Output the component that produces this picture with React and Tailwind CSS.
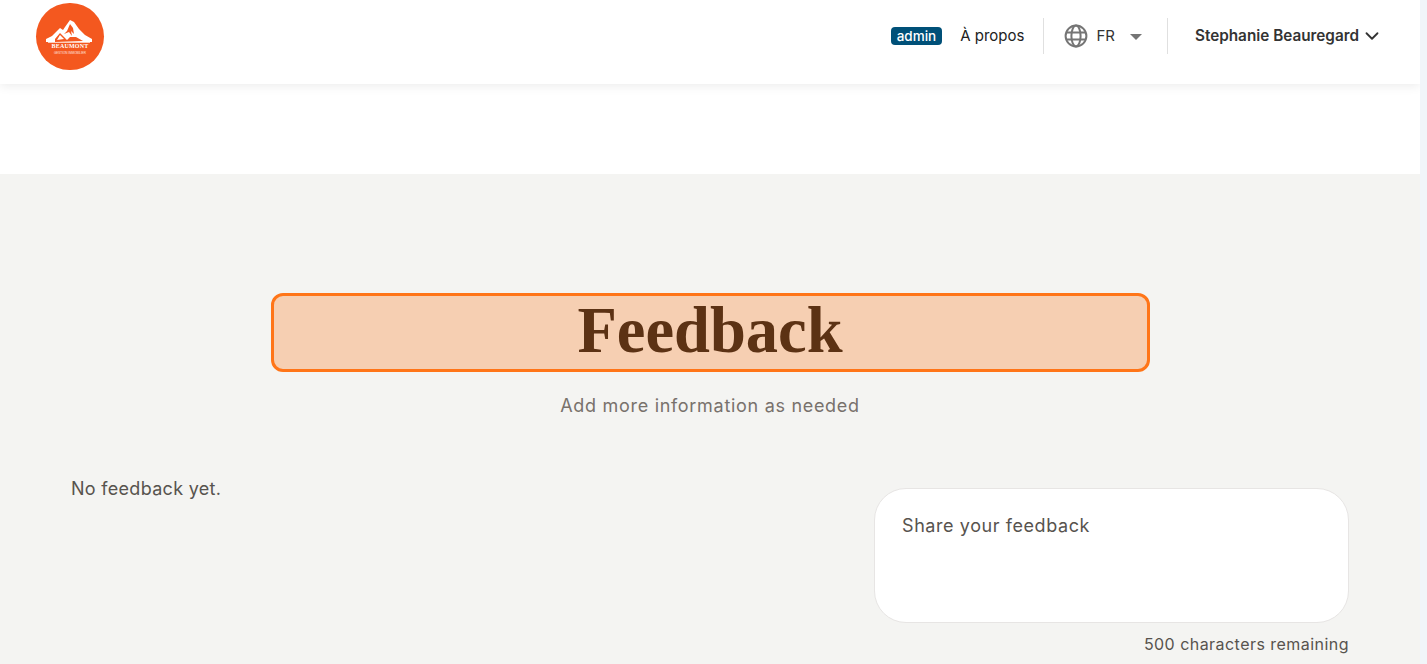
import React from "react";
import { ChevronDown } from "lucide-react";

const sans = "font-['Inter','Liberation_Sans',sans-serif]";
const body = "font-['Inter','Open_Sans',sans-serif]";

const Logo = () => (
  <div className="relative mt-px w-[68px] h-[67px] rounded-full bg-[#f4581f] overflow-hidden">
    <svg viewBox="0 0 68 67" className="absolute inset-0 w-full h-full">
      <path
        d="M10 36 L16 33 L20 29 L24 25 L27 27 L29 24 L34 17 L38 19 L43 26 L49 32 L56 36 L56 39 L10 39 Z"
        fill="#fff"
      />
      <path d="M34 21 L31 28 L28 31 L33 29 L36 33 L35 28 L38 31 L37 25 Z" fill="#f4581f" />
      <path d="M19 36 L24 30 L28 34 L31 37 L34 34 L40 34 L47 38 L19 39 Z" fill="#f4581f" />
      <path d="M24 32 L28 36 L21 37 Z" fill="#fff" />
      <path d="M12 39 H54 V40 H12 Z" fill="#fff" opacity="0.7" />
    </svg>
    <span className="absolute left-0 right-0 top-[40px] text-center text-[6px] leading-[7px] tracking-[0.2px] font-bold text-white font-['Liberation_Serif',serif]">
      BEAUMONT
    </span>
    <span className="absolute left-0 right-0 top-[48px] text-center text-[3px] leading-[4px] text-white/80 font-['Liberation_Sans',sans-serif]">
      GESTION IMMOBILIER
    </span>
  </div>
);

const GlobeIcon = () => (
  <svg viewBox="0 0 24 24" className="w-[24px] h-[24px]" fill="none" stroke="#757575" strokeWidth="2">
    <circle cx="12" cy="12" r="10.4" />
    <ellipse cx="12" cy="12" rx="4.6" ry="10.4" />
    <path d="M2.6 8.4 H21.4 M2.6 15.6 H21.4" />
  </svg>
);

export default function App() {
  return (
    <div className="flex h-[664px] overflow-hidden bg-white">
      <div className="w-[1420px] shrink-0">
        {/* Top bar */}
        <header className={`h-[84px] flex items-center justify-between pl-[36px] pr-[37px] pb-[12px] bg-white shadow-[0_2px_10px_rgba(0,0,0,0.08)] ${sans}`}>
          <Logo />
          <div className="flex items-center">
            <span className="h-[18px] px-[6px] rounded-[4px] bg-[#005078] text-white text-[13.5px] leading-[18px] font-medium">admin</span>
            <span className="ml-[18px] text-[15px] text-[#222]">À propos</span>
            <div className="ml-[19px] h-[36px] w-px bg-[#e0e0e0]" />
            <div className="ml-[20px] flex items-center">
              <GlobeIcon />
              <span className="ml-[8px] text-[15px] text-[#333]">FR</span>
              <span className="ml-[15px] mt-[2px] w-0 h-0 border-x-[6px] border-x-transparent border-t-[6px] border-t-[#757575]" />
            </div>
            <div className="ml-[25px] h-[36px] w-px bg-[#e0e0e0]" />
            <span className="ml-[27px] text-[15.3px] font-semibold text-[#333]">Stephanie Beauregard</span>
            <ChevronDown className="ml-[2px] w-[22px] h-[22px] text-[#333]" strokeWidth={2} />
          </div>
        </header>

        <div className="h-[90px]" />

        {/* Feedback section */}
        <main className={`h-[490px] bg-[#f4f4f2] pt-[119px] px-[71px] ${body}`}>
          <div className="flex flex-col items-center">
            <div className="w-[879px] h-[79px] flex items-center justify-center rounded-[12px] border-[3px] border-[#ff7518] bg-[#f6cfb2]">
              <h1 className="mt-[-3px] text-[64.5px] leading-[64px] font-bold text-[#5c3214] font-['Liberation_Serif',serif]">Feedback</h1>
            </div>
            <p className="mt-[21px] text-[18px] leading-[26px] tracking-[0.7px] text-[#78716c]">Add more information as needed</p>
          </div>

          <div className="mt-[69px] flex justify-between items-start">
            <p className="mt-[-11px] text-[18px] leading-[24px] tracking-[0.3px] text-[#57534e]">No feedback yet.</p>
            <div className="w-[475px]">
              <div className="h-[135px] rounded-[32px] border border-[#e7e5e4] bg-white px-[27px] py-[25px] text-[18px] leading-[24px] tracking-[0.58px] text-[#57534e]">
                Share your feedback
              </div>
              <p className="mt-[10px] text-right text-[16px] leading-[22px] tracking-[0.46px] text-[#57534e]">500 characters remaining</p>
            </div>
          </div>
        </main>
      </div>

      {/* Scrollbar gutter */}
      <div className="flex-1 bg-[#f1f5f9]" />
    </div>
  );
}
